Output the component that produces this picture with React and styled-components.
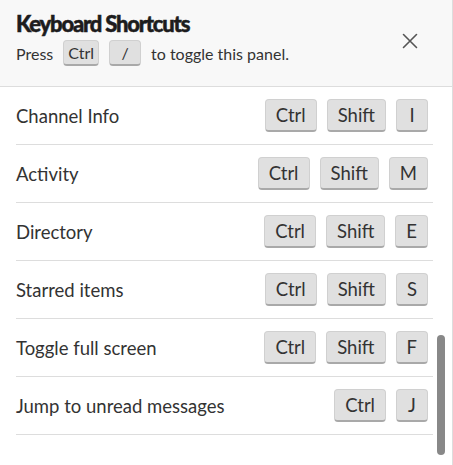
import React from 'react';
import styled, { createGlobalStyle } from 'styled-components';

const GlobalStyle = createGlobalStyle`
  html, body {
    margin: 0;
    padding: 0;
    background: #fff;
  }
  body {
    font-family: Lato, "Open Sans", sans-serif;
    color: #333;
  }
`;

const Panel = styled.div`
  position: relative;
  width: 452px;
  height: 465px;
  border-right: 1px solid #ddd;
  overflow: hidden;
  background: #fff;
`;

const Header = styled.div`
  height: 87px;
  box-sizing: border-box;
  padding: 10px 16px 0 16px;
  background: #f8f8f8;
  border-bottom: 1px solid #ddd;
  display: flex;
  justify-content: space-between;
  align-items: flex-start;
`;

const Titles = styled.div`
  display: flex;
  flex-direction: column;
`;

const Title = styled.h1`
  margin: 0;
  font-size: 22px;
  line-height: 28px;
  font-weight: 900;
  letter-spacing: -1.2px;
  -webkit-text-stroke: 0.5px #1d1c1d;
  color: #1d1c1d;
`;

const Hint = styled.div`
  display: flex;
  align-items: center;
  gap: 10px;
  margin-top: 2px;
  font-size: 16px;
  color: #333;
`;

const Key = styled.span`
  display: inline-flex;
  align-items: center;
  justify-content: center;
  box-sizing: border-box;
  height: ${p => (p.small ? '26px' : '33px')};
  min-width: 32px;
  padding: ${p => (p.small ? '0 4px' : '0 10px')};
  font-size: ${p => (p.small ? '16px' : '18.5px')};
  color: #333;
  background: #e0e0e0;
  border: 1px solid #d0d0d0;
  border-bottom: 2px solid #a9a9a9;
  border-radius: 4px;
`;

const CloseButton = styled.button`
  margin-top: 23px;
  margin-right: 18px;
  padding: 0;
  border: none;
  background: none;
  color: #555;
  display: flex;
  cursor: pointer;
`;

const List = styled.div`
  margin-left: 16px;
  width: 417px;
`;

const Row = styled.div`
  height: 57px;
  border-bottom: 1px solid #ddd;
  display: flex;
  align-items: center;
  justify-content: space-between;
  padding-right: 5px;
`;

const Label = styled.span`
  font-size: 18.5px;
  color: #333;
`;

const Keys = styled.div`
  display: flex;
  gap: 10px;
`;

const ScrollThumb = styled.div`
  position: absolute;
  right: 7px;
  top: 335px;
  width: 8px;
  height: 120px;
  border-radius: 4px;
  background: #888;
`;

const shortcuts = [
  { label: 'Channel Info', keys: ['Ctrl', 'Shift', 'I'] },
  { label: 'Activity', keys: ['Ctrl', 'Shift', 'M'] },
  { label: 'Directory', keys: ['Ctrl', 'Shift', 'E'] },
  { label: 'Starred items', keys: ['Ctrl', 'Shift', 'S'] },
  { label: 'Toggle full screen', keys: ['Ctrl', 'Shift', 'F'] },
  { label: 'Jump to unread messages', keys: ['Ctrl', 'J'] },
];

const App = () => (
  <>
    <GlobalStyle />
    <Panel>
      <Header>
        <Titles>
          <Title>Keyboard Shortcuts</Title>
          <Hint>
            <span>Press</span>
            <Key small>Ctrl</Key>
            <Key small>/</Key>
            <span>to toggle this panel.</span>
          </Hint>
        </Titles>
        <CloseButton aria-label="Close">
          <svg width="16" height="16" viewBox="0 0 16 16" fill="none" stroke="currentColor" strokeWidth="1.6" strokeLinecap="round">
            <path d="M1.5 1.5 L14.5 14.5 M14.5 1.5 L1.5 14.5" />
          </svg>
        </CloseButton>
      </Header>
      <List>
        {shortcuts.map(s => (
          <Row key={s.label}>
            <Label>{s.label}</Label>
            <Keys>
              {s.keys.map(k => (
                <Key key={k}>{k}</Key>
              ))}
            </Keys>
          </Row>
        ))}
      </List>
      <ScrollThumb />
    </Panel>
  </>
);

export default App;
